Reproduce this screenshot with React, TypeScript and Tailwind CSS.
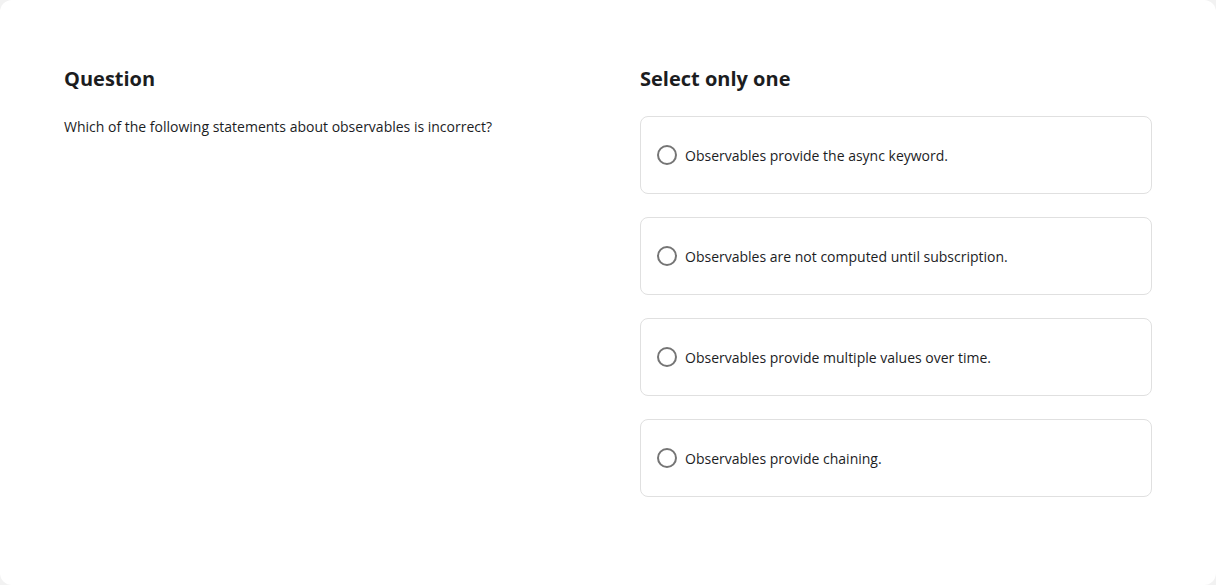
const options = [
  "Observables provide the async keyword.",
  "Observables are not computed until subscription.",
  "Observables provide multiple values over time.",
  "Observables provide chaining.",
];

export default function App() {
  return (
    <div className="min-h-[585px] bg-[#f2f2f2] font-['Open_Sans',sans-serif]">
      <div className="min-h-[585px] bg-white rounded-xl flex px-16 pt-[64px] gap-[64px]">
        <div className="w-[512px]">
          <h2 className="text-[20px] leading-[30px] font-bold text-[#1c1d1f]">Question</h2>
          <p className="mt-[22px] text-[14px] leading-[22px] text-[#1c1d1f]">
            Which of the following statements about observables is incorrect?
          </p>
        </div>
        <div className="w-[512px]">
          <h2 className="text-[20px] leading-[30px] font-bold text-[#1c1d1f]">Select only one</h2>
          <div className="mt-[22px] flex flex-col gap-[23px]">
            {options.map((o) => (
              <label
                key={o}
                className="h-[78px] flex items-center gap-2 px-4 border border-[#e0e0e0] rounded-lg cursor-pointer"
              >
                <span className="w-5 h-5 rounded-full border-2 border-[#757575] shrink-0" />
                <span className="pt-px text-[14px] leading-[22px] text-[#1c1d1f]">{o}</span>
              </label>
            ))}
          </div>
        </div>
      </div>
    </div>
  );
}
